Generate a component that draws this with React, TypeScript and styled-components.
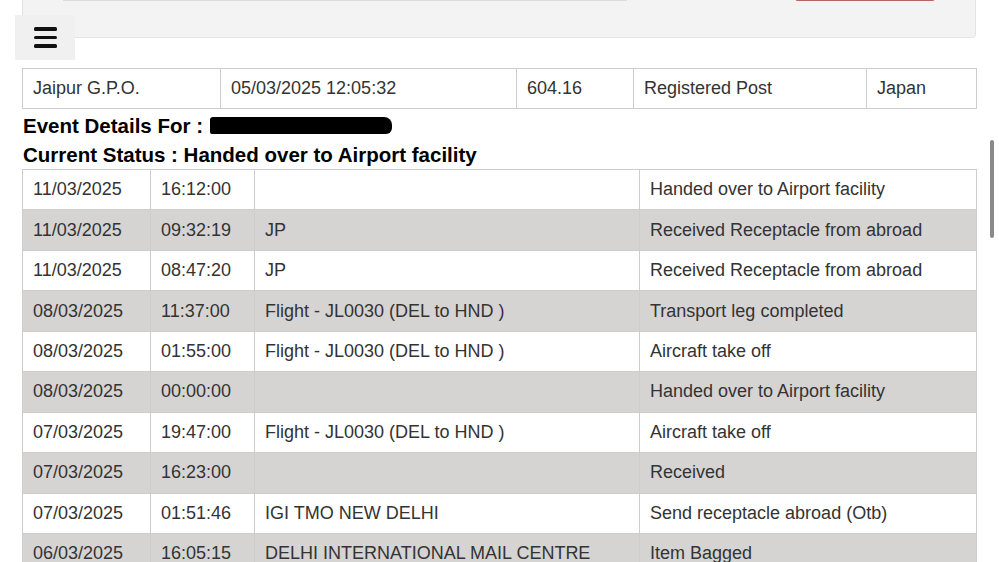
import styled, { createGlobalStyle } from 'styled-components';

interface IEvent {
  date: string;
  time: string;
  office: string;
  event: string;
}

const GlobalStyle = createGlobalStyle`
  html, body {
    margin: 0;
    padding: 0;
    overflow: hidden;
    background: #fff;
  }
  body {
    font-family: 'Liberation Sans', Arial, Helvetica, sans-serif;
  }
`;

const Page = styled.div`
  position: relative;
  padding: 0 23px 0 22px;
  height: 562px;
  overflow: hidden;
`;

const SearchPanel = styled.div`
  background: #f3f3f3;
  border: 1px solid #e4e4e4;
  border-top: none;
  border-radius: 0 0 4px 4px;
  padding: 0 40px 36px 40px;
  display: flex;
  align-items: flex-start;
`;

const SearchInput = styled.div`
  margin-top: -33px;
  width: 566px;
  height: 33px;
  background: #fff;
  border-bottom: 1px solid #dcdcdc;
`;

const SearchButton = styled.div`
  margin-top: -33px;
  margin-left: 168px;
  width: 140px;
  height: 33px;
  background: #d9534f;
  border-bottom: 1px solid #b7665f;
  border-radius: 0 0 3px 3px;
`;

const MenuToggle = styled.button`
  position: absolute;
  left: 15px;
  top: 15px;
  width: 60px;
  height: 45px;
  border: none;
  padding: 0;
  background: #f0f0f0;
  display: flex;
  flex-direction: column;
  justify-content: center;
  align-items: center;
  gap: 5px;
`;

const MenuBar = styled.span`
  display: block;
  width: 23px;
  height: 3.5px;
  background: #111;
  border-radius: 1.5px;
`;

const Table = styled.table<{ $top: number }>`
  width: 100%;
  margin-top: ${(p) => p.$top}px;
  border-collapse: collapse;
  table-layout: fixed;
  font-size: 18px;
  color: #333;
`;

const Row = styled.tr<{ $shaded?: boolean; $height: number }>`
  height: ${(p) => p.$height}px;
  background: ${(p) => (p.$shaded ? '#d6d3d3' : '#fff')};
`;

const Cell = styled.td`
  border: 1px solid #cdcdcd;
  padding: 0 10px;
  white-space: nowrap;
  overflow: hidden;
  vertical-align: middle;
`;

const Heading = styled.div`
  font-size: 20.5px;
  font-weight: bold;
  color: #000;
  line-height: 29px;
  display: flex;
  align-items: center;
  gap: 7px;
`;

const Redacted = styled.span`
  display: inline-block;
  width: 182px;
  height: 17px;
  background: #000;
  border-radius: 3px 8px 6px 2px;
`;

const Headings = styled.div`
  padding: 2px 0 0 1px;
`;

const ScrollThumb = styled.div`
  position: absolute;
  right: 5px;
  top: 140px;
  width: 4px;
  height: 98px;
  border-radius: 2px;
  background: #8a8a8a;
`;

const events: Array<IEvent> = [
  { date: '11/03/2025', time: '16:12:00', office: '', event: 'Handed over to Airport facility' },
  { date: '11/03/2025', time: '09:32:19', office: 'JP', event: 'Received Receptacle from abroad' },
  { date: '11/03/2025', time: '08:47:20', office: 'JP', event: 'Received Receptacle from abroad' },
  { date: '08/03/2025', time: '11:37:00', office: 'Flight - JL0030 (DEL to HND )', event: 'Transport leg completed' },
  { date: '08/03/2025', time: '01:55:00', office: 'Flight - JL0030 (DEL to HND )', event: 'Aircraft take off' },
  { date: '08/03/2025', time: '00:00:00', office: '', event: 'Handed over to Airport facility' },
  { date: '07/03/2025', time: '19:47:00', office: 'Flight - JL0030 (DEL to HND )', event: 'Aircraft take off' },
  { date: '07/03/2025', time: '16:23:00', office: '', event: 'Received' },
  { date: '07/03/2025', time: '01:51:46', office: 'IGI TMO NEW DELHI', event: 'Send receptacle abroad (Otb)' },
  { date: '06/03/2025', time: '16:05:15', office: 'DELHI INTERNATIONAL MAIL CENTRE', event: 'Item Bagged' },
];

export default function App() {
  return (
    <>
      <GlobalStyle />
      <Page>
        <SearchPanel>
          <SearchInput />
          <SearchButton />
        </SearchPanel>
        <MenuToggle aria-label='menu'>
          <MenuBar />
          <MenuBar />
          <MenuBar />
        </MenuToggle>

        <Table $top={30}>
          <colgroup>
            <col style={{ width: 198 }} />
            <col style={{ width: 296 }} />
            <col style={{ width: 117 }} />
            <col style={{ width: 233 }} />
            <col style={{ width: 110 }} />
          </colgroup>
          <tbody>
            <Row $height={40}>
              <Cell>Jaipur G.P.O.</Cell>
              <Cell>05/03/2025 12:05:32</Cell>
              <Cell>604.16</Cell>
              <Cell>Registered Post</Cell>
              <Cell>Japan</Cell>
            </Row>
          </tbody>
        </Table>

        <Headings>
          <Heading>
            Event Details For : <Redacted />
          </Heading>
          <Heading>Current Status : Handed over to Airport facility</Heading>
        </Headings>

        <Table $top={0}>
          <colgroup>
            <col style={{ width: 128 }} />
            <col style={{ width: 104 }} />
            <col style={{ width: 385 }} />
            <col style={{ width: 337 }} />
          </colgroup>
          <tbody>
            {events.map((elem, i) => (
              <Row key={i} $height={40.45} $shaded={i % 2 === 1}>
                <Cell>{elem.date}</Cell>
                <Cell>{elem.time}</Cell>
                <Cell>{elem.office}</Cell>
                <Cell>{elem.event}</Cell>
              </Row>
            ))}
          </tbody>
        </Table>
        <ScrollThumb />
      </Page>
    </>
  );
}
